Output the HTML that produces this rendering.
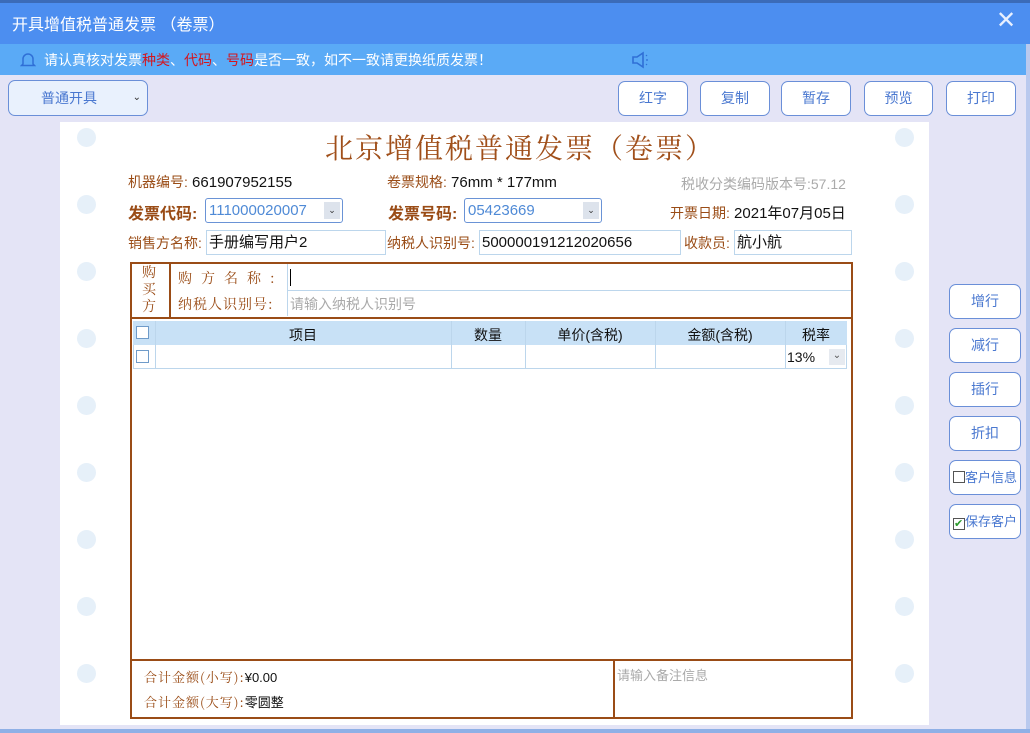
<!DOCTYPE html>
<html><head><meta charset="utf-8"><style>
*{margin:0;padding:0;box-sizing:border-box}
body{width:1030px;height:733px;position:relative;overflow:hidden;background:#e4e4f6;font-family:"Liberation Sans","Microsoft YaHei","Noto Sans CJK SC",sans-serif;font-size:14px;color:#111}
.a{position:absolute}
.btn{position:absolute;border:1px solid #6a8fd8;border-radius:7px;background:#fff;color:#4a78d0;font-size:14px;text-align:center;line-height:33px;height:35px}
.hole{position:absolute;width:19px;height:19px;border-radius:50%;background:#e6f0f9}
.br{color:#9a4c16}
.serif{font-family:"Noto Serif CJK SC","Liberation Serif",serif}
.inp{position:absolute;border:1px solid #bcd6ec;background:#fff;height:25px;line-height:23px;padding-left:2px;font-size:15px}
.sel{position:absolute;border:1px solid #6a93d6;border-radius:3px;background:#fff;color:#4f8ad6;height:25px;line-height:23px;padding-left:3px;font-size:15px}
.dd{position:absolute;right:2px;top:3px;width:16px;height:17px;background:#dde3ec;font-size:9px;color:#333;text-align:center;line-height:17px}
.cb{position:absolute;width:13px;height:13px;border:1px solid #6f9bc9;background:#fff}
</style></head><body>
<div class="a" style="left:0;top:0;width:1030px;height:44px;background:#4c8ef0"></div>
<div class="a" style="left:0;top:0;width:1030px;height:3px;background:#3b6bb8"></div>
<div class="a" style="left:12px;top:11px;color:#fff;font-size:16px">开具增值税普通发票 （卷票）</div>
<div class="a" style="left:996px;top:8px;color:#e8f0ff;font-size:24px;line-height:26px">✕</div>
<div class="a" style="left:0;top:44px;width:1030px;height:31px;background:#5aaaf6"></div>
<svg class="a" style="left:20px;top:51px" width="16" height="18" viewBox="0 0 16 18"><path d="M3 13V8a5 5 0 0 1 10 0v5l1.5 1.5h-13z" fill="none" stroke="#2f6fd6" stroke-width="1.5"/></svg>
<div class="a" style="left:44px;top:50px;color:#fff;font-size:14px">请认真核对发票<span style="color:#d4151d">种类</span>、<span style="color:#d4151d">代码</span>、<span style="color:#d4151d">号码</span>是否一致，如不一致请更换纸质发票！</div>
<svg class="a" style="left:630px;top:50px" width="22" height="20" viewBox="0 0 22 20"><path d="M3 7h4l6-4v14l-6-4H3z" fill="none" stroke="#2f6fd6" stroke-width="1.6"/><path d="M16 6l1-1M16 10h2M16 14l1 1" stroke="#2f6fd6" stroke-width="1.2"/></svg>
<div class="a" style="left:1026px;top:44px;width:4px;height:689px;background:#b9c9ee"></div>
<div class="a" style="left:0;top:729px;width:1030px;height:4px;background:#8fb0e6"></div>

<div class="btn" style="left:8px;top:80px;width:140px;height:36px;line-height:34px;background:#e9f1fd;text-align:left;padding-left:32px">普通开具<span style="position:absolute;right:6px;font-size:10px;color:#333">⌄</span></div>
<div class="btn" style="left:618px;top:81px;width:70px">红字</div>
<div class="btn" style="left:700px;top:81px;width:70px">复制</div>
<div class="btn" style="left:781px;top:81px;width:70px">暂存</div>
<div class="btn" style="left:864px;top:81px;width:69px">预览</div>
<div class="btn" style="left:946px;top:81px;width:70px">打印</div>

<div class="btn" style="left:949px;top:284px;width:72px">增行</div>
<div class="btn" style="left:949px;top:328px;width:72px">减行</div>
<div class="btn" style="left:949px;top:372px;width:72px">插行</div>
<div class="btn" style="left:949px;top:416px;width:72px">折扣</div>
<div class="btn" style="left:949px;top:460px;width:72px;font-size:13px;text-align:left;padding-left:3px"><span style="display:inline-block;width:12px;height:12px;border:1px solid #555;vertical-align:-1px"></span>客户信息</div>
<div class="btn" style="left:949px;top:504px;width:72px;font-size:13px;text-align:left;padding-left:3px"><span style="display:inline-block;width:12px;height:12px;border:1px solid #555;vertical-align:-1px;color:#2a9a2a;font-size:11px;line-height:10px">✔</span>保存客户</div>

<div class="a" style="left:60px;top:122px;width:869px;height:603px;background:#fff"></div>
<div class="hole" style="left:77px;top:128px"></div><div class="hole" style="left:895px;top:128px"></div>
<div class="hole" style="left:77px;top:195px"></div><div class="hole" style="left:895px;top:195px"></div>
<div class="hole" style="left:77px;top:262px"></div><div class="hole" style="left:895px;top:262px"></div>
<div class="hole" style="left:77px;top:329px"></div><div class="hole" style="left:895px;top:329px"></div>
<div class="hole" style="left:77px;top:396px"></div><div class="hole" style="left:895px;top:396px"></div>
<div class="hole" style="left:77px;top:463px"></div><div class="hole" style="left:895px;top:463px"></div>
<div class="hole" style="left:77px;top:530px"></div><div class="hole" style="left:895px;top:530px"></div>
<div class="hole" style="left:77px;top:597px"></div><div class="hole" style="left:895px;top:597px"></div>
<div class="hole" style="left:77px;top:664px"></div><div class="hole" style="left:895px;top:664px"></div>

<div class="a serif br" style="left:325px;top:127px;font-size:28px;letter-spacing:2px;color:#a04f1a">北京增值税普通发票（卷票）</div>

<div class="a" style="left:128px;top:172px;font-size:15px"><span class="br" style="font-size:14px">机器编号:</span> 661907952155</div>
<div class="a" style="left:387px;top:172px;font-size:15px"><span class="br" style="font-size:14px">卷票规格:</span> 76mm * 177mm</div>
<div class="a" style="left:681px;top:174px;font-size:14px;color:#aaa">税收分类编码版本号:57.12</div>

<div class="a br" style="left:128px;top:200px;font-size:16px;font-weight:bold">发票代码:</div>
<div class="sel" style="left:205px;top:198px;width:138px">111000020007<div class="dd">⌄</div></div>
<div class="a br" style="left:388px;top:200px;font-size:16px;font-weight:bold">发票号码:</div>
<div class="sel" style="left:464px;top:198px;width:138px">05423669<div class="dd">⌄</div></div>
<div class="a" style="left:670px;top:202px;font-size:15px"><span class="br" style="font-size:14px">开票日期:</span> 2021年07月05日</div>

<div class="a br" style="left:128px;top:233px">销售方名称:</div>
<div class="inp" style="left:206px;top:230px;width:180px">手册编写用户2</div>
<div class="a br" style="left:387px;top:233px">纳税人识别号:</div>
<div class="inp" style="left:479px;top:230px;width:202px">500000191212020656</div>
<div class="a br" style="left:684px;top:233px">收款员:</div>
<div class="inp" style="left:734px;top:230px;width:118px">航小航</div>

<div class="a" style="left:130px;top:262px;width:723px;height:457px;border:2px solid #9a4c16"></div>
<div class="a" style="left:130px;top:317px;width:723px;height:2px;background:#9a4c16"></div>
<div class="a" style="left:169px;top:262px;width:2px;height:56px;background:#9a4c16"></div>
<div class="a serif br" style="left:142px;top:264px;font-size:14px;line-height:17px;width:16px">购买方</div>
<div class="a serif br" style="left:178px;top:268px;font-size:14px;letter-spacing:9px">购方名称:</div>
<div class="a serif br" style="left:178px;top:294px;font-size:14px;letter-spacing:1px">纳税人识别号:</div>
<div class="a" style="left:287px;top:264px;width:564px;height:27px;border-bottom:1px solid #bcd6ec;border-left:1px solid #bcd6ec"><div style="position:absolute;left:2px;top:5px;width:1px;height:17px;background:#000"></div></div>
<div class="a" style="left:287px;top:291px;width:564px;height:25px;border-left:1px solid #bcd6ec;color:#aaa;padding:3px 0 0 2px">请输入纳税人识别号</div>

<div class="a" style="left:133px;top:321px;width:714px;height:24px;background:#c8e1f6"></div>
<div class="a" style="left:133px;top:345px;width:714px;height:24px;border:1px solid #bcd6ec;border-top:none"></div>
<div class="cb" style="left:136px;top:326px"></div><div class="cb" style="left:136px;top:350px"></div>
<div class="a" style="left:155px;top:321px;width:1px;height:48px;background:#bcd6ec"></div>
<div class="a" style="left:451px;top:321px;width:1px;height:48px;background:#bcd6ec"></div>
<div class="a" style="left:525px;top:321px;width:1px;height:48px;background:#bcd6ec"></div>
<div class="a" style="left:655px;top:321px;width:1px;height:48px;background:#bcd6ec"></div>
<div class="a" style="left:785px;top:321px;width:1px;height:48px;background:#bcd6ec"></div>
<div class="a" style="left:155px;top:325px;width:296px;text-align:center">项目</div>
<div class="a" style="left:451px;top:325px;width:74px;text-align:center">数量</div>
<div class="a" style="left:525px;top:325px;width:130px;text-align:center">单价(含税)</div>
<div class="a" style="left:655px;top:325px;width:130px;text-align:center">金额(含税)</div>
<div class="a" style="left:785px;top:325px;width:62px;text-align:center">税率</div>
<div class="a" style="left:787px;top:349px">13%</div>
<div class="a" style="left:829px;top:349px;width:16px;height:16px;background:#e6eaf0;font-size:10px;color:#555;text-align:center;line-height:14px">⌄</div>

<div class="a" style="left:130px;top:659px;width:723px;height:2px;background:#9a4c16"></div>
<div class="a" style="left:613px;top:659px;width:2px;height:60px;background:#9a4c16"></div>
<div class="a" style="left:144px;top:667px;font-size:13px"><span class="serif br" style="letter-spacing:1px">合计金额(小写):</span>¥0.00</div>
<div class="a" style="left:144px;top:692px;font-size:13px"><span class="serif br" style="letter-spacing:1px">合计金额(大写):</span>零圆整</div>
<div class="a" style="left:617px;top:665px;color:#aaa;font-size:13px">请输入备注信息</div>
</body></html>
